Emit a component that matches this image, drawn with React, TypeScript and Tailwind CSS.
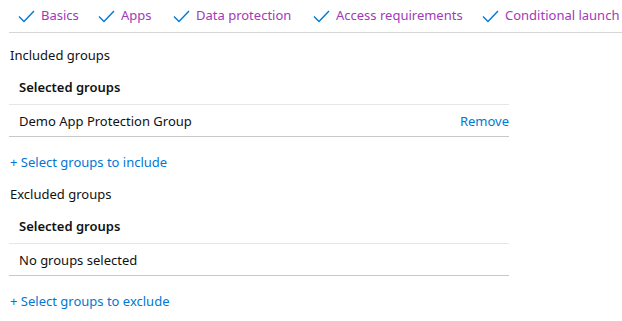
import React from "react";

const Check = () => (
  <svg width="17" height="13" viewBox="0 0 17 13" className="shrink-0">
    <path d="M1 6.5 L6 11.5 L16 1" fill="none" stroke="#0078d4" strokeWidth="1.4" />
  </svg>
);

const tabs: [string, string][] = [
  ["Basics", "w-[80px]"],
  ["Apps", "w-[75px]"],
  ["Data protection", "w-[140px]"],
  ["Access requirements", "w-[169px]"],
  ["Conditional launch", "w-[136px]"],
];

function Section({ label, row, right, link }: { label: string; row: string; right?: string; link: string }) {
  return (
    <div>
      <div className="ml-[10px] leading-[18px] h-[18px]">{label}</div>
      <div className="ml-[9px] w-[500px] border-b border-[#e6e6e6] pl-[10px] pt-[14px] pb-[8px] leading-[18px] font-semibold">
        Selected groups
      </div>
      <div className="ml-[9px] w-[500px] border-b border-[#c8c8c8] pl-[10px] pt-[7px] pb-[6px] leading-[18px] flex justify-between">
        <span>{row}</span>
        {right && <span className="text-[#0078d4]">{right}</span>}
      </div>
      <div className="ml-[10px] mt-[16px] leading-[18px] text-[#0078d4]">+ {link}</div>
    </div>
  );
}

export default function App() {
  return (
    <div className="w-[622px] h-[321px] bg-white text-[13px] text-[#111] overflow-hidden" style={{ fontFamily: '"Noto Sans", "Open Sans", sans-serif' }}>
      <div className="ml-[9px] h-[33px] border-b border-[#d6d6d6] flex items-center pl-[9px] whitespace-nowrap">
        {tabs.map(([t, w]) => (
          <div key={t} className={`flex items-center gap-[6px] text-[#a13ab7] text-[13px] shrink-0 ${w}`}>
            <Check />
            <span>{t}</span>
          </div>
        ))}
      </div>
      <div className="pt-[13px]">
        <Section label="Included groups" row="Demo App Protection Group" right="Remove" link="Select groups to include" />
        <div className="mt-[14px]">
          <Section label="Excluded groups" row="No groups selected" link="Select groups to exclude" />
        </div>
      </div>
    </div>
  );
}
